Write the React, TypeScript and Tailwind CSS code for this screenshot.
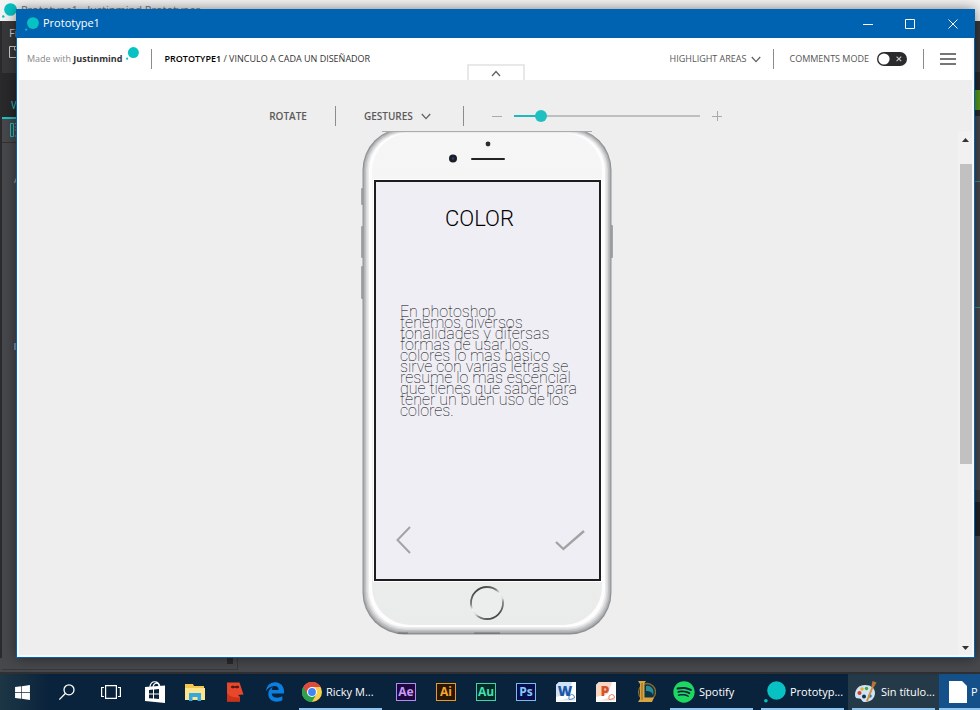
import React, { useState } from 'react';
import { FaEdgeLegacy, FaSpotify, FaWindows } from 'react-icons/fa6';

const noteLines = [
  'En photoshop',
  'tenemos diversos',
  'tonalidades y difersas',
  'formas de usar los.',
  'colores lo mas basico',
  'sirve con varias letras se',
  'resume lo mas escencial',
  'que tienes que saber para',
  'tener un buen uso de los',
  'colores.',
];

const Chevron: React.FC<{ up?: boolean }> = ({ up }) => (
  <svg width="10" height="7" viewBox="0 0 10 7" fill="none" stroke="#5f6368" strokeWidth="1.3">
    <path d={up ? 'M1 6 5 1.5 9 6' : 'M.8 1 5 5.6 9.2 1'} />
  </svg>
);

const Divider: React.FC = () => <span className="block h-5 w-px bg-[#8c8c8c]" />;

const JustinmindLogo: React.FC<{ size: number }> = ({ size }) => (
  <svg className="shrink-0" width={size} height={size} viewBox="0 0 22 22" fill="#08c1c3">
    <circle cx="12.5" cy="9.5" r="9.3" />
    <circle cx="1.9" cy="19.7" r="1.8" />
  </svg>
);

const TitleBar: React.FC = () => (
  <div className="flex h-[29px] shrink-0 items-center bg-[#0063b1] pl-2 text-white">
    <JustinmindLogo size={14} />
    <span className="ml-1 text-[11px]">Prototype1</span>
    <div className="ml-auto flex h-full">
      <button aria-label="Minimize" className="grid w-[42px] place-items-center">
        <svg width="10" height="10" viewBox="0 0 10 10" stroke="#fff" fill="none"><path d="M0 5.5h10" /></svg>
      </button>
      <button aria-label="Maximize" className="grid w-[42px] place-items-center">
        <svg width="10" height="10" viewBox="0 0 10 10" stroke="#fff" fill="none"><path d="M.5.5h9v9h-9z" /></svg>
      </button>
      <button aria-label="Close" className="grid w-[43px] place-items-center">
        <svg width="10" height="10" viewBox="0 0 10 10" stroke="#fff" fill="none"><path d="m.5.5 9 9m0-9-9 9" /></svg>
      </button>
    </div>
  </div>
);

const Header: React.FC = () => {
  const [comments, setComments] = useState(false);

  return (
    <header className="relative flex h-[42px] shrink-0 items-center bg-white pl-2 pr-4 text-[9px] text-[#555]">
      <span className="text-[#888]">
        Made with <b className="font-bold text-[#333]">Justinmind</b>
      </span>
      <span className="mb-3 ml-1"><JustinmindLogo size={13} /></span>
      <span className="mx-3"><Divider /></span>
      <span className="text-[#333]">
        <span className="font-semibold text-black">PROTOTYPE1</span> / VINCULO A CADA UN DISEÑADOR
      </span>

      <div className="ml-auto flex items-center">
        <button className="flex items-center gap-1 text-[#555]">
          HIGHLIGHT AREAS <Chevron />
        </button>
        <span className="ml-3 mr-4"><Divider /></span>
        <label className="flex cursor-pointer items-center gap-2 text-[#555]">
          COMMENTS MODE
          <input
            type="checkbox"
            className="peer sr-only"
            checked={comments}
            onChange={(e) => setComments(e.target.checked)}
          />
          <svg width="30" height="14" viewBox="0 0 30 14">
            <rect width="30" height="14" rx="7" fill="#2b2b2d" />
            <circle cx={comments ? 23 : 7} cy="7" r="5.6" fill="#fff" />
            {!comments && <path d="m19.6 4.6 4.6 4.6m0-4.6-4.6 4.6" stroke="#ccc" strokeWidth="1.1" />}
          </svg>
        </label>
        <span className="mx-4"><Divider /></span>
        <button aria-label="Menu">
          <svg width="16" height="12" viewBox="0 0 16 12" stroke="#4a4a4a" strokeWidth="1.3">
            <path d="M0 1h16M0 6h16M0 11h16" />
          </svg>
        </button>
      </div>

      <button
        aria-label="Hide toolbar"
        className="absolute bottom-0 left-1/2 grid h-4 w-[58px] -translate-x-1/2 place-items-center border-2 border-b-0 border-[#e8e8e8] bg-white"
      >
        <Chevron up />
      </button>
    </header>
  );
};

const Toolbar: React.FC = () => {
  const [zoom, setZoom] = useState(12);

  return (
    <div className="flex h-[51px] shrink-0 items-center justify-center pt-[21px] text-[10px] font-semibold text-[#5a5a5a]">
      <button>ROTATE</button>
      <span className="mx-7"><Divider /></span>
      <button className="flex items-center gap-2">
        GESTURES <Chevron />
      </button>
      <span className="ml-8 mr-7"><Divider /></span>
      <button aria-label="Zoom out">
        <svg width="10" height="10" viewBox="0 0 10 10" stroke="#aaa"><path d="M0 5.5h10" /></svg>
      </button>
      <input
        type="range"
        aria-label="Zoom"
        min={0}
        max={100}
        value={zoom}
        onChange={(e) => setZoom(Number(e.target.value))}
        className="mx-3 h-3 w-[186px] cursor-pointer appearance-none bg-[length:100%_2px] bg-center bg-no-repeat [&::-webkit-slider-thumb]:size-3 [&::-webkit-slider-thumb]:appearance-none [&::-webkit-slider-thumb]:rounded-full [&::-webkit-slider-thumb]:bg-[#20c0c2]"
        style={{
          backgroundImage: `linear-gradient(to right, #1fb9bb ${zoom}%, #bfbfbf ${zoom}%)`,
        }}
      />
      <button aria-label="Zoom in">
        <svg width="10" height="10" viewBox="0 0 10 10" stroke="#aaa"><path d="M0 5.5h10M5.5 0v10" /></svg>
      </button>
    </div>
  );
};

const PhoneFrame: React.FC = () => (
  <svg className="absolute inset-0" width="252" height="504" viewBox="0 0 252 504">
    <defs>
      <linearGradient id="face" x1="0" y1="0" x2="0" y2="1">
        <stop offset="0" stopColor="#f6f6f6" />
        <stop offset="1" stopColor="#e9ecea" />
      </linearGradient>
      <linearGradient id="ring" x1="0.2" y1="0" x2="0.8" y2="1">
        <stop offset="0.05" stopColor="#444" />
        <stop offset="0.3" stopColor="#777" />
        <stop offset="0.45" stopColor="#f4f4f4" />
        <stop offset="0.6" stopColor="#ddd" />
        <stop offset="0.7" stopColor="#888" />
        <stop offset="0.95" stopColor="#444" />
      </linearGradient>
    </defs>
    <g fill="#a4a6a8">
      <rect y="57" width="3" height="17" rx="1" />
      <rect y="95" width="3" height="32" rx="1" />
      <rect y="135" width="3" height="33" rx="1" />
      <rect x="249" y="94" width="3" height="33" rx="1" />
    </g>
    {/* the body runs a little past the top edge, which cuts it flat */}
    <rect x="1.5" y="-3" width="249" height="506.500" rx="42" fill="#8e9193" />
    <rect x="2.5" y="-2" width="247" height="504" rx="41" fill="#a9abad" />
    <rect x="3.5" y="-1" width="245" height="501.500" rx="40" fill="#bfc1c3" />
    <rect x="5" y="0" width="242" height="499" rx="39" fill="#d7d8d9" />
    <rect x="6.5" y="1" width="239" height="496.500" rx="38" fill="#ececec" />
    <rect x="8" y="2" width="236" height="494" rx="37" fill="#fdfdfd" />
    <rect x="11" y="2" width="230" height="492" rx="38" fill="url(#face)" />
    <path d="M21 .5h210" stroke="#a9abad" />
    <circle cx="127" cy="13" r="2.4" fill="#2b2b2b" />
    <circle cx="92" cy="27.5" r="4" fill="#1c1d24" />
    <circle cx="92" cy="27.5" r="1.3" fill="#2c3b6b" />
    <path d="M111 28h32" stroke="#222" strokeWidth="2" strokeLinecap="round" />
    <circle cx="126" cy="472" r="16" fill="#eceeed" stroke="url(#ring)" strokeWidth="1.8" />
    <path d="M37 502.3h10M113 502.3h26" stroke="#777a7c" strokeWidth="1.4" />
  </svg>
);

const Phone: React.FC = () => (
  <div className="relative h-[504px] w-[252px] shrink-0 pl-[13px] pt-[49px]">
    <PhoneFrame />
    <div className="relative flex h-[401px] w-[227px] flex-col border-2 border-[#1d1d1f] bg-[#efeef5] pl-6 pr-[14px] font-['Roboto'] text-[#222] ring-1 ring-white">
      <h1 className="pl-[45px] pt-[23px] text-[22px] leading-7 font-light text-black">COLOR</h1>
      <p className="pt-[73px] text-base leading-[11px] font-thin whitespace-nowrap text-black">
        {noteLines.map((line) => (
          <span key={line} className="block">{line}</span>
        ))}
      </p>
      <div className="mt-auto flex items-center justify-between pb-[25px]">
        <button aria-label="Back" className="-ml-1">
          <svg width="15" height="28" viewBox="0 0 15 28" fill="none" stroke="#a3a3a3" strokeWidth="2">
            <path d="M14 1 1.5 14 14 27" />
          </svg>
        </button>
        <button aria-label="Accept">
          <svg width="30" height="21" viewBox="0 0 30 21" fill="none" stroke="#a3a3a3" strokeWidth="2.4">
            <path d="m1 12 7.4 7L29 1" />
          </svg>
        </button>
      </div>
    </div>
  </div>
);

const ScrollBar: React.FC = () => (
  <div className="flex w-[14px] shrink-0 flex-col items-end bg-[#f1f1f1]">
    <button aria-label="Scroll up" className="grid h-[17px] w-[14px] shrink-0 place-items-center">
      <svg width="7" height="4" viewBox="0 0 7 4" fill="#333"><path d="M0 4h7L3.5 0z" /></svg>
    </button>
    <div className="flex w-3 flex-1 flex-col pt-4">
      <div className="h-[63%] bg-[#c1c1c1]" />
    </div>
    <button aria-label="Scroll down" className="grid h-[15px] w-[14px] shrink-0 place-items-center">
      <svg width="7" height="4" viewBox="0 0 7 4" fill="#333"><path d="M0 0h7L3.5 4z" /></svg>
    </button>
  </div>
);

// Editor window, mostly covered by the simulator
const EditorBackdrop: React.FC = () => (
  <div className="flex flex-1 flex-col bg-[#47484c] text-[11px]">
    <div className="flex h-[21px] shrink-0 items-center gap-1 overflow-hidden bg-[#f3f3f3] pl-0.5 text-[11px] text-[#777]">
      <JustinmindLogo size={15} />
      Prototype1 - Justinmind Prototyper
    </div>
    <div className="flex flex-1 justify-between">
      <div className="flex w-4 flex-col overflow-hidden border-l-2 border-[#2b2b2d]">
        <div className="h-[52px] shrink-0 bg-[#38383a] pl-[7px] pt-1 text-[#ccc]">
          Fi
          <svg className="mt-1" width="10" height="12" viewBox="0 0 10 12" fill="none" stroke="#ccc">
            <path d="M9 .5H.5v11H9M5.5.5V4H9" />
          </svg>
        </div>
        <div className="flex h-[46px] shrink-0 items-end border-b-2 border-[#20c0c2] bg-[#29292b] pb-1 pl-[9px] text-[#20c0c2]">W</div>
        <div className="h-6 shrink-0 border-b border-[#333] bg-[#47484c] pl-2 pt-1">
          <svg width="10" height="14" viewBox="0 0 10 14" fill="none" stroke="#20c0c2">
            <path d="M.5.5h3v13h-3zM5 .5h3M5 4h3M5 7h3M5 13h3" />
          </svg>
        </div>
        <span className="mt-7 pl-3 text-[#aaa]">A</span>
        <span className="mt-[155px] ml-3 h-[7px] w-1 shrink-0 bg-[#6f8fb0]" />
      </div>
      <div className="flex w-1.5 flex-col">
        <div className="h-[51px] bg-[#38383a]" />
        <div className="h-[18px] bg-[#29292b]" />
        <div className="h-5 bg-[#589a1c]" />
        <div className="h-[6px] bg-[#29292b]" />
        <div className="h-[66px] border-b border-[#3c8f90]" />
        <div className="h-[126px] border-b border-[#3c8f90]" />
        <div className="mt-[182px] h-3 bg-[#38383a]" />
        <div className="h-[34px] bg-[#242426]" />
      </div>
    </div>
    <div className="flex h-4 shrink-0 border-b-2 border-[#303032]">
      <div className="mb-0.5 ml-0.5 flex w-[236px] items-start justify-end border-b border-r border-[#37383b] pr-1">
        <span className="size-1.5 bg-[#29292b]" />
      </div>
    </div>
  </div>
);

const StoreIcon: React.FC = () => (
  <svg width="20" height="24" viewBox="0 0 20 24">
    <path d="M5 7c0-7 9-7 10 0M8 7c1-5 6-5 6-1" fill="none" stroke="#fff" strokeWidth="1.2" />
    <path d="M0 7 20 5.5V23L0 21z" fill="#fff" />
    <path d="m4 10 4-.4v4H4zm5-.5 5-.5v4.6H9zM4 14.6h4v4l-4-.4zm5 0h5V19l-5-.4z" fill="#0b2239" />
  </svg>
);

const FolderIcon: React.FC = () => (
  <svg width="20" height="18" viewBox="0 0 20 18">
    <path d="M0 1h8l1 2h10v13H0z" fill="#f3c64f" />
    <path d="M0 5h20v12H0z" fill="#fde58f" />
    <path d="M4 18v-8h12v8h-3.5v-4h-5v4z" fill="#35a8e0" />
  </svg>
);

const FaceIcon: React.FC = () => (
  <svg width="18" height="20" viewBox="0 0 18 20">
    <path d="M1 .5h12.5L17.500 12.500 12 13l2 2v4.5H1z" fill="#e8472b" />
    <path d="M5 5q2-2 4 0 2-2 4 0-2 2-4 0-2 2-4 0" fill="#e8472b" stroke="#4a1710" />
    <circle cx="7" cy="5" r=".9" fill="#4a1710" />
    <circle cx="11" cy="5" r=".9" fill="#4a1710" />
    <path d="M1 19.5V11c3 4 7 4.500 13 4.500v4z" fill="#cb3217" />
  </svg>
);

const ChromeIcon: React.FC = () => (
  <svg className="shrink-0" width="20" height="20" viewBox="0 0 20 20">
    <circle cx="10" cy="10" r="10" fill="#fcd04b" />
    <path d="M1.3 5A10 10 0 0 0 10 20l4.3-7.5L10 10z" fill="#2ba24c" />
    <path d="M1.3 5a10 10 0 0 1 17.400 0H10L5.7 12.5z" fill="#dd4b3e" />
    <circle cx="10" cy="10" r="5" fill="#fff" />
    <circle cx="10" cy="10" r="3.9" fill="#4285f4" />
  </svg>
);

const LeagueIcon: React.FC = () => (
  <svg width="20" height="22" viewBox="0 0 20 22">
    <circle cx="11" cy="11" r="8.5" fill="#0b3542" stroke="#8c6a2c" strokeWidth="1.3" />
    <path d="M10 5c5-1 9 4 7 9-1-3-3-4-7-4z" fill="#2c8a98" />
    <path d="M2 0h8L8.500 2v14.500H18L16 21H2l2-3V3z" fill="#d9a441" />
    <path d="M6 2v17" stroke="#8f6420" />
  </svg>
);

const PaintIcon: React.FC = () => (
  <svg className="shrink-0" width="22" height="22" viewBox="0 0 22 22">
    <path d="M10 4c6 0 10 3 10 8s-4 9-10 9c-3 0-3-2-4-3s-6 1-6-4C0 8 4 4 10 4z" fill="#cfe4f3" />
    <circle cx="4.500" cy="12" r="2" fill="#d8392b" />
    <circle cx="7" cy="8" r="1.7" fill="#e6b422" />
    <circle cx="11.500" cy="7.500" r="1.7" fill="#4ba446" />
    <circle cx="9" cy="15.500" r="2" fill="#11304a" />
    <circle cx="15" cy="15" r="1.800" fill="#2f77c9" />
    <path d="m12 20 6-15" stroke="#d98b3a" strokeWidth="2" />
    <path d="m16.500 5 1-5 4 1.500L19 6z" fill="#b9733a" />
  </svg>
);

interface OfficeIconProps {
  letter: string;
  color: string;
  wash: string;
}

const OfficeIcon: React.FC<OfficeIconProps> = ({ letter, color, wash }) => (
  <span className="relative grid size-5 place-items-center text-sm leading-none font-extrabold">
    <svg className="absolute inset-0" width="20" height="20" viewBox="0 0 20 20">
      <path d="M3 0h17v20H0V3z" fill="#fff" />
      <path d="M3 0h13l-4 12-12 3V3z" fill={wash} />
      <path d="M1 18c6 1 10-2 18-4v4.500H1z" fill={wash} />
      <path d="M13 14q3-3 5-.5t-2 3.500-3 0z" fill="#fff" stroke={color} strokeWidth=".7" />
    </svg>
    <span className="relative pr-0.5 pb-0.5" style={{ color }}>{letter}</span>
  </span>
);

interface TaskProps {
  label: string;
  children: React.ReactNode;
}

const PinnedTask: React.FC<TaskProps> = ({ label, children }) => (
  <button aria-label={label} className="grid w-10 shrink-0 place-items-center">{children}</button>
);

const OpenTask: React.FC<TaskProps> = ({ label, children }) => (
  <button className="mx-1 flex w-[83px] shrink-0 items-center gap-1 border-b-2 border-[#8fc4ee] pl-[3px] pt-0.5 text-[11px]">
    {children}
    <span className="whitespace-nowrap">{label}</span>
  </button>
);

const adobe = 'grid h-[18px] w-5 place-items-center border text-xs leading-none font-bold';

const TaskBar: React.FC = () => (
  <nav className="flex h-9 shrink-0 overflow-hidden bg-linear-to-r from-[#1d3644] via-[#0a233c] via-5% to-[#0a233c] text-white">
    <button aria-label="Start" className="grid w-11 shrink-0 place-items-center"><FaWindows size={17} /></button>
    <button aria-label="Search" className="grid w-[45px] shrink-0 place-items-center">
      <svg width="16" height="16" viewBox="0 0 16 16" fill="none" stroke="#fff" strokeWidth="1.3">
        <circle cx="10" cy="5.8" r="5" />
        <path d="m6.300 9.500-6 6" />
      </svg>
    </button>
    <button aria-label="Task view" className="mr-0.5 grid w-11 shrink-0 place-items-center">
      <svg width="20" height="14" viewBox="0 0 20 14" fill="none" stroke="#fff" strokeWidth="1.2">
        <path d="M4.600.6h10.800v12.800H4.600zM3 2.500H.6v9H3M17 2.500h2.400v9H17" />
      </svg>
    </button>
    <PinnedTask label="Store"><StoreIcon /></PinnedTask>
    <PinnedTask label="File Explorer"><FolderIcon /></PinnedTask>
    <PinnedTask label="Face"><FaceIcon /></PinnedTask>
    <PinnedTask label="Edge"><FaEdgeLegacy size={20} color="#0b7fe0" /></PinnedTask>
    <OpenTask label="Ricky M..."><ChromeIcon /></OpenTask>
    <PinnedTask label="After Effects"><span className={`${adobe} border-[#b18cf0] bg-[#1f0740] text-[#c79cf5]`}>Ae</span></PinnedTask>
    <PinnedTask label="Illustrator"><span className={`${adobe} border-[#e79a2c] bg-[#2b1600] text-[#f6a734]`}>Ai</span></PinnedTask>
    <PinnedTask label="Audition"><span className={`${adobe} border-[#3fd3a6] bg-[#032b27] text-[#43dfb0]`}>Au</span></PinnedTask>
    <PinnedTask label="Photoshop"><span className={`${adobe} border-[#7db8f0] bg-[#07104d] text-[#8ac6f7]`}>Ps</span></PinnedTask>
    <PinnedTask label="Word"><OfficeIcon letter="W" color="#1c57a8" wash="#cfe1f5" /></PinnedTask>
    <PinnedTask label="PowerPoint"><OfficeIcon letter="P" color="#d4542a" wash="#f8d6c6" /></PinnedTask>
    <PinnedTask label="League"><LeagueIcon /></PinnedTask>
    <OpenTask label="Spotify"><FaSpotify size={22} color="#1ed760" className="shrink-0" /></OpenTask>
    <OpenTask label="Prototyp..."><JustinmindLogo size={22} /></OpenTask>
    <div className="flex flex-1 bg-[#253a48]">
      <OpenTask label="Sin título..."><PaintIcon /></OpenTask>
      <button className="flex flex-1 items-center gap-1 overflow-hidden border-b-2 border-[#8fc4ee] bg-[#14508a] pl-2.5 pt-0.5 text-[11px]">
        <svg className="shrink-0" width="18" height="22" viewBox="0 0 18 22"><path d="M0 0h13l5 5v17H0z" fill="#fff" /></svg>
        P
      </button>
    </div>
  </nav>
);

export default function App() {
  return (
    <div className="relative flex h-screen min-h-[710px] flex-col overflow-hidden font-['Open_Sans',sans-serif]">
      <EditorBackdrop />
      <TaskBar />

      <main className="absolute top-[9px] right-[5px] bottom-[52px] left-4 flex flex-col border-x border-b border-[#0063b1] bg-[#eee] shadow-[0_0_12px_rgba(0,0,0,0.5)]">
        <TitleBar />
        <div className="flex min-h-0 flex-1 flex-col border-2 border-t-0 border-[#f8f8f8]">
          <Header />
          <Toolbar />
          <div className="flex min-h-0 flex-1">
            <div className="flex min-w-0 flex-1 justify-center overflow-hidden pr-[3px]">
              <Phone />
            </div>
            <ScrollBar />
          </div>
        </div>
      </main>
    </div>
  );
}
